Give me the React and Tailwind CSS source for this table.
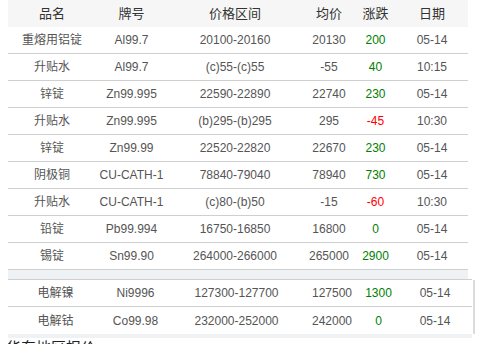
import React from 'react';

const rows = [
  ['重熔用铝锭', 'Al99.7', '20100-20160', '20130', '200', '05-14'],
  ['升贴水', 'Al99.7', '(c)55-(c)55', '-55', '40', '10:15'],
  ['锌锭', 'Zn99.995', '22590-22890', '22740', '230', '05-14'],
  ['升贴水', 'Zn99.995', '(b)295-(b)295', '295', '-45', '10:30'],
  ['锌锭', 'Zn99.99', '22520-22820', '22670', '230', '05-14'],
  ['阴极铜', 'CU-CATH-1', '78840-79040', '78940', '730', '05-14'],
  ['升贴水', 'CU-CATH-1', '(c)80-(b)50', '-15', '-60', '10:30'],
  ['铅锭', 'Pb99.994', '16750-16850', '16800', '0', '05-14'],
  ['锡锭', 'Sn99.90', '264000-266000', '265000', '2900', '05-14'],
];

const rows2 = [
  ['电解镍', 'Ni9996', '127300-127700', '127500', '1300', '05-14'],
  ['电解钴', 'Co99.98', '232000-252000', '242000', '0', '05-14'],
];

const headers = ['品名', '牌号', '价格区间', '均价', '涨跌', '日期'];

const cols1 = ['w-[88px]', 'w-[71px]', 'w-[136px]', 'w-[52px]', 'w-[41px]', 'w-[72px]'];
const cols2 = ['w-[95px]', 'w-[65px]', 'w-[137px]', 'w-[54px]', 'w-[39px]', 'w-[74px]'];

const Row = ({ cells, cols, last }) => (
  <div className={`flex h-[27px] items-center text-[12px] text-[#555] ${last ? '' : 'border-b border-[#cfcfcf]'}`}>
    {cells.map((c, i) => (
      <div
        key={i}
        className={`${cols[i]} text-center ${
          i === 4 ? (c.startsWith('-') ? 'text-[#ff0000]' : 'text-[#008000]') : ''
        }`}
      >
        {c}
      </div>
    ))}
  </div>
);

export default function App() {
  return (
    <div className="w-[483px] h-[344px] overflow-hidden bg-white font-['Liberation_Sans','Noto_Sans_CJK_SC',sans-serif]">
      <div className="pl-2">
        {/* Main table */}
        <div className="w-[460px]">
          <div className="flex h-[27px] items-center bg-[#f6f6f6] text-[13px] text-[#333]">
            {headers.map((h, i) => (
              <div key={h} className={`${cols1[i]} text-center`}>{h}</div>
            ))}
          </div>
          {rows.map((r, i) => (
            <Row key={i} cells={r} cols={cols1} />
          ))}
        </div>
        <div className="h-[9px] w-[460px] bg-[#eef2f5]" />

        {/* Second table */}
        <div className="flex">
          <div className="w-[464px] border-t border-[#cfcfcf]">
            {rows2.map((r, i) => (
              <Row key={i} cells={r} cols={cols2} last={i === rows2.length - 1} />
            ))}
          </div>
          <div className="ml-px mt-px w-[2px] bg-[#dcdcdc]" />
        </div>
        <div className="h-[4px] w-[464px] bg-[#eef2f5]" />
      </div>
      <div className="pl-1.5 text-[15px] leading-[20px] text-[#222]">华东地区报价</div>
    </div>
  );
}
